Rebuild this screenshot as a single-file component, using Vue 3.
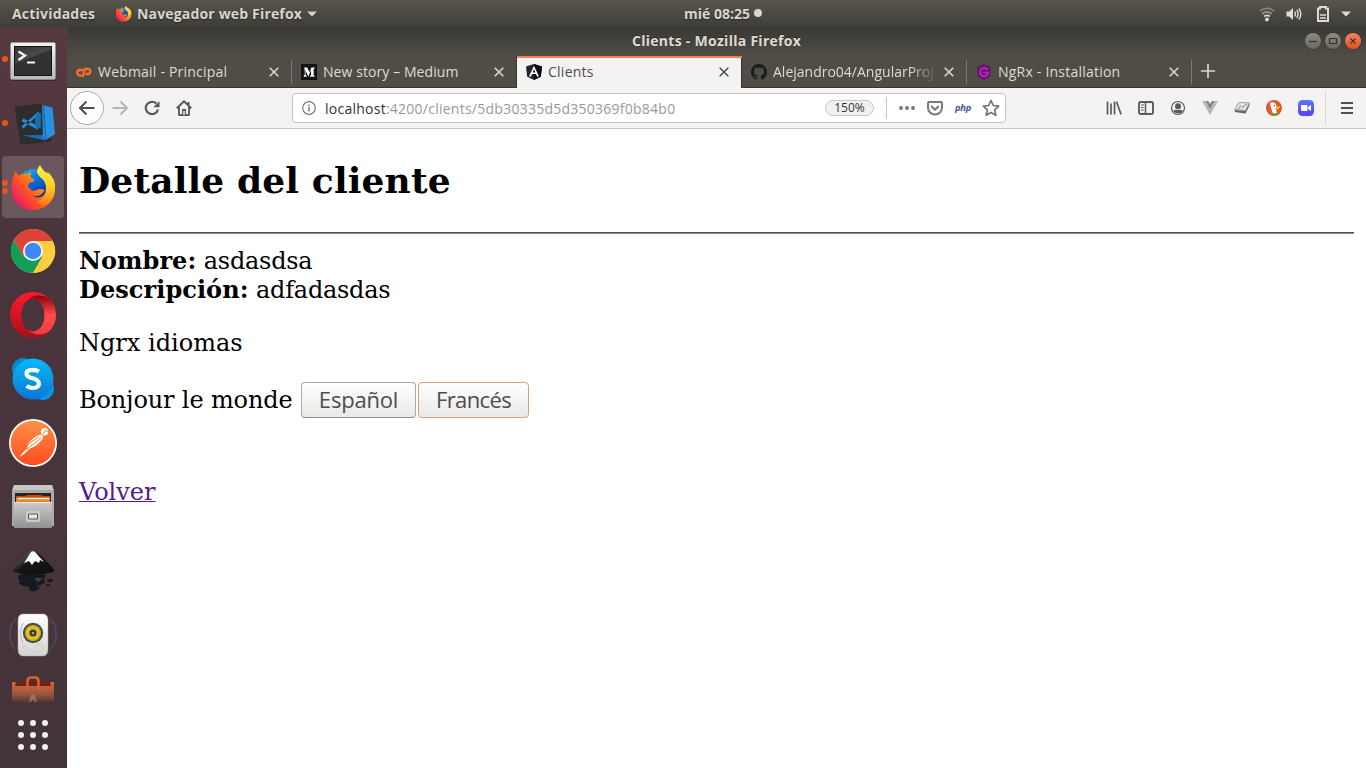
<script setup>
const tabs = [
  { id: 'cpanel', label: 'Webmail - Principal', cls: 't1' },
  { id: 'medium', label: 'New story – Medium', cls: 't2' },
  { id: 'angular', label: 'Clients', cls: 't3', active: true },
  { id: 'github', label: 'Alejandro04/AngularProj', cls: 't4' },
  { id: 'ngrx', label: 'NgRx - Installation', cls: 't5' },
]
</script>

<template>
  <div class="desktop">
    <header class="panel">
      <div class="panel-left">
        <span class="activities">Actividades</span>
        <svg class="ff-small" viewBox="0 0 48 48"><use href="#firefox" /></svg>
        <span class="appname">Navegador web Firefox</span>
        <svg class="caret" viewBox="0 0 10 6"><path d="M0 .5h10L5 5.5z" fill="#d3d1cb" /></svg>
      </div>
      <div class="clock"><span>mié 08:25</span><i></i></div>
      <div class="panel-right">
        <svg width="16" height="16" viewBox="0 0 16 16" fill="none" stroke-width="1.7">
          <path d="M1 5Q8 -.2 15 5" stroke="#85827b" /><path d="M3.2 7.800Q8 4 12.800 7.800" stroke="#99968f" />
          <path d="M5.2 10.500Q8 8.400 10.800 10.500" stroke="#dfdbd2" /><circle cx="8" cy="13.500" r="1.900" fill="#dfdbd2" />
        </svg>
        <svg width="16" height="16" viewBox="0 0 16 16" fill="none" stroke="#dfdbd2" stroke-width="1.4">
          <path d="M.5 5.500h2.700L7 2v12l-3.800-3.500H.5z" fill="#dfdbd2" stroke="none" />
          <path d="M8.700 5.600q1.600 2.400 0 4.800M10.800 4q2.600 4 0 8M12.900 2.500q3.800 5.500 0 11" />
        </svg>
        <svg width="14" height="16" viewBox="0 0 14 16" fill="none" stroke="#dfdbd2">
          <path d="M2 2.500h2V1h6v1.500h2V15H2z" stroke-width="2" /><path d="M4 9h6M4 12h6" stroke-width="1.500" />
        </svg>
        <svg class="caret" viewBox="0 0 10 6"><path d="M0 .5h10L5 5.500z" fill="#dfdbd2" /></svg>
      </div>
    </header>

    <div class="below">
      <nav class="dock">
        <div class="slot first">
          <i class="run"></i>
          <svg viewBox="0 0 48 48">
            <defs>
              <linearGradient id="gT" x2="0" y2="1"><stop stop-color="#f4f4f4" /><stop offset="1" stop-color="#b9b9b9" /></linearGradient>
              <linearGradient id="gS" x2=".5" y2="1"><stop stop-color="#353535" /><stop offset=".45" stop-color="#484a49" /><stop offset=".5" stop-color="#303131" /><stop offset="1" stop-color="#303131" /></linearGradient>
            </defs>
            <rect x="1" y="6" width="46" height="38" rx="1.500" fill="#00000055" />
            <rect x="1.500" y="5.500" width="45" height="37" rx="1.500" fill="url(#gT)" stroke="#999" stroke-width=".6" />
            <rect x="5" y="9" width="38" height="30" fill="#151515" /><rect x="6" y="10" width="36" height="28" fill="url(#gS)" />
            <path d="M9.500 14.500l6.500 4-6.500 4.500" fill="none" stroke="#f5f5f5" stroke-width="2.400" /><path d="M18 25.500h8" stroke="#f5f5f5" stroke-width="2" />
          </svg>
        </div>
        <div class="slot">
          <i class="run second"></i>
          <svg viewBox="0 0 48 48">
            <path d="M5.500 8L32 4.500 43 42.500 11.500 46z" fill="#2d2d2e" />
            <path d="M13 36.200l23-.2-1 5z" fill="#1173bd" />
            <path d="M33 6L43.500 8.500 46 35 37.500 40.500 34 41z" fill="#2692e0" /><path d="M33 6L35.500 37 34 41 37.500 40.500 35.500 8z" fill="#1a74bd" />
            <path fill-rule="evenodd" d="M29 13l2.500 1.500V28l-3 2.500L12.500 22l2-2.500 11.500 6V18.500L14.500 29.500 12.500 27.500z" fill="#2490dc" />
            <path d="M29 13l2.500 1.500V28l-3 2.500-2.500-5V18.500z" fill="#116db4" />
          </svg>
        </div>
        <div class="slot selected">
          <i class="run two"></i>
          <svg viewBox="0 0 48 48">
            <defs>
              <linearGradient id="gF" x1="1" y1="0" x2="0" y2=".8"><stop stop-color="#ffe72e" /><stop offset=".35" stop-color="#ff9b10" /><stop offset=".67" stop-color="#ff4b2a" /><stop offset="1" stop-color="#e41273" /></linearGradient>
              <linearGradient id="gB" x1=".2" x2=".7" y2="1"><stop stop-color="#13b0f0" /><stop offset=".5" stop-color="#0760d4" /><stop offset="1" stop-color="#1b1d72" /></linearGradient>
              <linearGradient id="gY" x2="0" y2="1"><stop stop-color="#fff34a" /><stop offset=".5" stop-color="#ffd32a" /><stop offset="1" stop-color="#ff7b14" /></linearGradient>
            </defs>
            <g id="firefox">
              <circle cx="25" cy="23" r="17" fill="url(#gB)" />
              <path d="M7 8q.5 3 2.500 4.500Q13 10 18 11l4-2.500-.5 5.500 4 3q-1 2-5 2.500-3 3 0 6 3 3.500 7 1.500 4-2 8 0-2 5.500-8 6-3 .5-5-.5 7 4 12 0 5-5 4.500-12L34 9l6 1q7 7 6 16-1 12-10 18-12 6-22 1Q3 40 2.500 27 2 16 7 8z" fill="url(#gF)" />
              <path d="M31 2q2 5 8 9 8 6 7 16-.5 9-7 13-7 4-11-1 9-3 9-14 0-7-6-11Q25 9 31 2z" fill="url(#gY)" />
            </g>
          </svg>
        </div>
        <div class="slot">
          <svg viewBox="0 0 48 48">
            <circle cx="24" cy="24" r="22" fill="#fdcd40" />
            <path d="M4.900 13A22 22 0 0 1 43.100 13L24 14 14.500 29.500z" fill="#db4437" />
            <path d="M4.900 13A22 22 0 0 0 24 46L33.500 29.500 14.500 29.500z" fill="#129d58" />
            <path d="M43.100 13A22 22 0 0 1 24 46L33.500 29.500 24 14z" fill="#fdcd40" /><path d="M24 14H43.600l-.8-1.600H24z" fill="#db4437" />
            <circle cx="24" cy="24" r="10" fill="#f5f5f5" /><circle cx="24" cy="24" r="8.200" fill="#4285f4" />
          </svg>
        </div>
        <div class="slot">
          <svg viewBox="0 0 48 48">
            <defs><linearGradient id="gO" x2="0" y2="1"><stop stop-color="#ff1b2d" /><stop offset="1" stop-color="#a70f17" /></linearGradient><linearGradient id="gP" x2="0" y2="1"><stop stop-color="#8f0008" /><stop offset=".5" stop-color="#ff4b4b" /><stop offset="1" stop-color="#ef3e3e" /></linearGradient></defs>
            <path fill-rule="evenodd" d="M24 1a23 23 0 1 0 0 46a23 23 0 0 0 0-46zM24 7.500c6.500 0 11.500 7 11.500 16.500S30.500 40.500 24 40.500 12.500 33.500 12.500 24 17.500 7.500 24 7.500z" fill="url(#gO)" />
            <path d="M18 9.500Q27 1 39.500 7A23 23 0 0 1 39.500 41Q29 47 18 38.500 22 41.300 26 40.300 35.500 37 35.500 24 35.500 11 26 7.700 22 7 18 9.500z" fill="url(#gP)" />
          </svg>
        </div>
        <div class="slot">
          <svg viewBox="0 0 48 48">
            <defs><linearGradient id="gK" x2="0" y2="1"><stop stop-color="#07b9f4" /><stop offset="1" stop-color="#0b77d7" /></linearGradient></defs>
            <circle cx="14" cy="14" r="11" fill="#0688cf" /><circle cx="34" cy="34" r="11" fill="#0695e4" /><circle cx="24" cy="24" r="20.500" fill="url(#gK)" />
            <path d="M29.800 16.700Q27.500 14.800 23.500 14.800C15.500 15 15.500 21.500 23.500 23.300S32.500 32.500 24 33Q20 33 17.700 30.800" fill="none" stroke="#fff" stroke-width="4.200" />
          </svg>
        </div>
        <div class="slot">
          <svg viewBox="0 0 48 48">
            <defs><linearGradient id="gM" x2="0" y2="1"><stop stop-color="#ff9144" /><stop offset="1" stop-color="#ff4c22" /></linearGradient></defs>
            <circle cx="24" cy="24" r="24" fill="#fff" /><circle cx="24" cy="24" r="22.300" fill="url(#gM)" />
            <circle cx="35.500" cy="12.800" r="3.700" fill="#fff" /><path d="M34 15l3-4 1.500 2" stroke="#ff803c" fill="none" />
            <path d="M31 15q4 2 2.500 5L28 26l-7 3.500-5.500 5-3.500 3-1-.5q3-4 7.500-8l.5-4q4-6 12.500-10z" fill="#fff" /><path d="M19 25.500l11-8M22 27l10-8M18 30l5-4" stroke="#ff7334" stroke-width="1" />
          </svg>
        </div>
        <div class="slot">
          <svg viewBox="0 0 48 48">
            <defs><linearGradient id="gC" x2="0" y2="1"><stop stop-color="#ccc" /><stop offset="1" stop-color="#919191" /></linearGradient></defs>
            <path d="M5 2h38l2 5v36H3V7z" fill="#aaa" /><path d="M5 2h38l1 5H4z" fill="#c7c7c7" />
            <path d="M6 10h36v10H6z" fill="#292424" /><path d="M7 13h9l2-1h14l2 1h7v7H7z" fill="#ba4a12" /><path d="M7 14.500h34v5H7z" fill="#e78831" /><path d="M9 15.500h31" stroke="#fff1dd" stroke-width="1.300" />
            <rect x="5" y="19" width="38" height="26" rx="1" fill="url(#gC)" /><path d="M5 19.500h38" stroke="#e3e3e3" />
            <rect x="17" y="28" width="14" height="11" rx="2" fill="#ccc" /><rect x="19" y="30.500" width="10" height="6" rx="1" fill="#555" /><rect x="20" y="31.500" width="8" height="4" fill="#e9e9e9" />
          </svg>
        </div>
        <div class="slot">
          <svg viewBox="0 0 48 48">
            <defs><linearGradient id="gI" x2="1" y2=".8"><stop stop-color="#999" /><stop offset=".5" stop-color="#151515" /><stop offset="1" stop-color="#111" /></linearGradient></defs>
            <path d="M9 28q14-3 28 0l-2 4 1 4-5 2-3 1 3 2-6 4-5-2 0-3-8-2 4-3-6-1z" fill="#151a20" />
            <path d="M21 4q3-2.500 6 0L44 21q3 4-2 4.500-6 1.500-8 2H14q-3-1.500-9-2.500-3-2 0-5z" fill="url(#gI)" />
            <path d="M22 5q2-1.500 4 0l9 10-4-2-1 3-4-2-3 4-3-4-5 2z" fill="#fafafa" />
            <path d="M25 31l9 0-5 4z" fill="#374756" /><ellipse cx="13" cy="36" rx="3" ry="1.500" fill="#151515" /><ellipse cx="41" cy="33.500" rx="3" ry="1.500" fill="#151515" /><ellipse cx="39" cy="38" rx="2" ry="1" fill="#151515" />
          </svg>
        </div>
        <div class="slot">
          <svg viewBox="0 0 48 48">
            <defs><linearGradient id="gR" x2="0" y2="1"><stop stop-color="#fff" /><stop offset="1" stop-color="#d3d3d0" /></linearGradient></defs>
            <g fill="none" stroke="#46577f" opacity=".55" stroke-width="1.500"><path d="M7 7q-12 16 0 32M41 7q12 16 0 32M4 10q-7 13 0 26M44 10q7 13 0 26" /></g>
            <path d="M13 3h22q4 1 4 6v29q0 7-5 7H14q-5 0-5-7V9q0-5 4-6z" fill="url(#gR)" stroke="#aaa" stroke-width=".5" />
            <circle cx="24" cy="22" r="10.200" fill="#474b4c" /><circle cx="24" cy="22" r="8" fill="#d0ae17" /><circle cx="24" cy="22" r="5.700" fill="none" stroke="#e6cb30" stroke-width="1.200" />
            <circle cx="24" cy="22" r="3.300" fill="#292b2d" /><circle cx="24" cy="22" r="1.500" fill="#9aa1a8" /><path d="M14 12q-5 10 0 20" fill="none" stroke="#839ac4" stroke-width="1" opacity=".7" />
            <circle cx="30" cy="36.500" r="4" fill="#ddd" stroke="#bbb" stroke-width=".5" /><path d="M14 38v-4l4 3v3" fill="none" stroke="#ccc" />
          </svg>
        </div>
        <div class="slot partial">
          <svg width="48" height="34" viewBox="0 0 48 34">
            <defs><linearGradient id="gQ" x2="0" y2="1"><stop stop-color="#b86641" /><stop offset=".55" stop-color="#96543c" /><stop offset="1" stop-color="#50343a" /></linearGradient></defs>
            <path d="M5 14h38v6H5z" fill="#6f2412" /><path d="M3 14l4 0-1 4-3 1zM45 14l-4 0 1 4 3 1z" fill="#e25a2b" /><path d="M3 18h42v16H3z" fill="url(#gQ)" />
            <path d="M18.500 22v-9q0-3.500 3.500-3.500h4q3.500 0 3.500 3.500v9" fill="none" stroke="#e05a2c" stroke-width="2.600" /><path d="M20 34l2-7q2-1 4 0l2 7h-2l-1-2h-2l-1 2z" fill="#a48d86" opacity=".6" />
          </svg>
        </div>
        <div class="grid"><i v-for="n in 9" :key="n"></i></div>
      </nav>

      <main class="window">
        <div class="titlebar">
          <span class="wtitle">Clients - Mozilla Firefox</span>
          <div class="wbtns">
            <i><svg viewBox="0 0 16 16"><path d="M4 8.500h8" /></svg></i>
            <i><svg viewBox="0 0 16 16"><path d="M4.500 5.500h7v5h-7z" /></svg></i>
            <i class="x"><svg viewBox="0 0 16 16"><path d="M5.300 5.300l5.400 5.400m0-5.400l-5.400 5.400" /></svg></i>
          </div>
        </div>
        <div class="tabs">
          <div v-for="t in tabs" :key="t.id" class="tab" :class="[t.id, { active: t.active }]">
            <svg v-if="t.id === 'cpanel'" class="fav" viewBox="0 0 16 16" fill="none" stroke="#ff6c2c" stroke-width="2.300"><path d="M7 6H4A2.500 2.500 0 0 0 4 11.500h1.500M6.800 13l2-8h3a2.300 2.300 0 0 1 0 5H9.500" /></svg>
            <svg v-else-if="t.id === 'medium'" class="fav" viewBox="0 0 16 16"><path d="M0 0h16v16H0z" fill="#121212" /><path d="M2.700 3.500h3.500l2.200 4.800 2-4.800h3.300v.8l-1 .9v6l1 .8v.7H9v-.7l1-.9V6l-2.700 6.700L4.500 6.200v4.500l1.200 1.400v.6h-3v-.6l1-1.400V5z" fill="#fff" /></svg>
            <svg v-else-if="t.id === 'angular'" class="fav" viewBox="0 0 16 16"><path d="M8 0l8 2.500-1.200 10.300L8 16l-6.800-3.200L0 2.500z" fill="#20242e" /><path d="M8 0l8 2.500-1.200 10.300L8 16z" fill="#0b0d14" /><path fill-rule="evenodd" d="M8 1.800l5 10.700h-2l-1-2.400H6l-1 2.400H3zM8 5.300L6.700 8.500h2.600z" fill="#fff" /></svg>
            <svg v-else-if="t.id === 'github'" class="fav" viewBox="0 0 16 16"><path fill="#1a1b1c" d="M8 0C3.580 0 0 3.580 0 8c0 3.540 2.290 6.530 5.470 7.590.4.070.55-.17.55-.38 0-.19-.01-.82-.01-1.490-2.010.37-2.530-.49-2.690-.94-.09-.23-.48-.94-.82-1.130-.28-.15-.68-.52-.01-.53.63-.01 1.080.58 1.230.82.72 1.210 1.870.87 2.330.66.07-.52.28-.87.51-1.070-1.780-.2-3.640-.89-3.640-3.950 0-.87.31-1.590.82-2.150-.08-.2-.36-1.020.08-2.120 0 0 .67-.21 2.200.82.64-.18 1.320-.27 2-.27s1.360.09 2 .27c1.530-1.040 2.200-.82 2.200-.82.44 1.100.16 1.920.08 2.120.51.56.82 1.270.82 2.150 0 3.070-1.870 3.750-3.650 3.950.29.25.54.73.54 1.480 0 1.070-.01 1.930-.01 2.200 0 .21.15.46.55.38A8.010 8.010 0 0 0 16 8c0-4.420-3.580-8-8-8z" /></svg>
            <svg v-else class="fav" viewBox="0 0 16 16"><path d="M8 0l7 2.500-1 10L8 16l-6-3.500-1-10z" fill="#58205e" /><path d="M12 5.500Q7.500 2.500 5 5.500q-2 4 .5 6.200 3.500 1.800 6-1 .8-1.200.5-2.700" fill="none" stroke="#d612e0" stroke-width="1.900" /><path d="M7.500 7.500q.5 2.200 3.500 1" fill="none" stroke="#d612e0" stroke-width="1.500" /></svg>
            <span class="tlabel" :class="t.cls">{{ t.label }}</span>
            <svg class="close" viewBox="0 0 10 10"><path d="M.7.7l8.600 8.600m0-8.600L.7 9.300" /></svg>
          </div>
          <svg class="plus" viewBox="0 0 14 14"><path d="M7 0v14M0 7h14" stroke="#d8d6cf" stroke-width="1.700" /></svg>
        </div>

        <div class="toolbar">
          <div class="back"><svg class="ic" viewBox="0 0 16 16"><path d="M15.500 8H1.500M7.500 1.500L1 8l6.500 6.500" stroke="#4e4e4e" stroke-width="2" fill="none" /></svg></div>
          <svg class="ic fwd" viewBox="0 0 16 16"><path d="M.5 8h14M8.500 1.500L15 8l-6.500 6.500" stroke="#b9b7b5" stroke-width="2" fill="none" /></svg>
          <svg class="ic rel" viewBox="0 0 16 16"><path d="M14 9.500A6.200 6.200 0 1 1 12.400 3.600" stroke="#5a5a5a" stroke-width="2.200" fill="none" /><path d="M15.500 1v6.200H9.300z" fill="#5a5a5a" /></svg>
          <svg class="ic home" viewBox="0 0 16 16"><path d="M.8 8.300L8 1.300l7.200 7M3 7v8h10V7M12.500 5V2" stroke="#5a5a5a" stroke-width="1.900" fill="none" stroke-linejoin="round" /><path d="M6 9h4v6H6z" fill="#5a5a5a" /><path d="M7.300 11h1.400v4H7.300z" fill="#f4f3f2" /></svg>
          <div class="url">
            <svg class="info" viewBox="0 0 14 14" fill="none" stroke="#7a7a7a"><circle cx="7" cy="7" r="6.300" stroke-width="1.200" /><path d="M7 6v4.500M7 3.500v1.600" stroke-width="1.500" /></svg>
            <span class="addr"><b>localhost</b>:4200/clients/5db30335d5d350369f0b84b0</span>
            <span class="zoom">150%</span>
            <i class="vsep"></i>
            <svg class="dots" viewBox="0 0 16 4" fill="#747474"><circle cx="2" cy="2" r="1.900" /><circle cx="8" cy="2" r="1.900" /><circle cx="14" cy="2" r="1.900" /></svg>
            <svg class="pocket" viewBox="0 0 16 16" fill="none" stroke="#7a7a7a" stroke-width="2" stroke-linecap="round" stroke-linejoin="round"><path d="M2 2h12q1 0 1 1v4.500a7 7 0 0 1-14 0V3q0-1 1-1zM4.700 6.500L8 9.700l3.300-3.200" /></svg>
            <span class="php">php</span>
            <svg class="star" viewBox="0 0 18 18"><path d="M9 1.500l2.300 5 5.400.6-4 3.700 1.100 5.500L9 13.500l-4.800 2.800 1.100-5.500-4-3.700 5.400-.6z" fill="none" stroke="#747474" stroke-width="1.700" stroke-linejoin="round" /></svg>
          </div>
          <div class="ext">
            <svg class="ic" viewBox="0 0 16 16" stroke="#5a5a5a" stroke-width="1.700"><path d="M1.500 1.500v13M5 3.500v11M8.500 1.500v13M10.500 1.800l4.600 12.700" /></svg>
            <svg class="ic" viewBox="0 0 16 16" fill="none" stroke="#5a5a5a"><rect x="1" y="2" width="14" height="12" rx="1.800" stroke-width="1.900" /><path d="M7.500 2v12" stroke-width="1.500" /><path d="M3 5h3M3 7.500h2.500M3 10h3" stroke-width="1" /></svg>
            <svg class="ic" viewBox="0 0 16 16"><circle cx="8" cy="8" r="6.500" fill="none" stroke="#5a5a5a" stroke-width="1.200" /><circle cx="8" cy="6.200" r="3" fill="#5a5a5a" /><path d="M3 11q2-2 5-1 3-1 5 1-4 5-10 0z" fill="#5a5a5a" /></svg>
            <svg class="ic" viewBox="0 0 16 16"><path d="M0 1h3.300L8 9.200 12.700 1H16L8 15z" fill="#b8b8b8" /><path d="M3.300 1H6.300L8 4l1.700-3h3L8 9.200z" fill="#858585" /></svg>
            <svg class="ic" viewBox="0 0 16 16"><path d="M5 2.500l10.500.5-4 7.500L.8 9.500z" fill="#e8e8e8" stroke="#888" stroke-width=".8" /><path d="M.8 10l10.700 1 4-7.500v2l-4 8L.8 12z" fill="#666" /><path d="M5.500 5l2.500 2.500 5-3.500M4 9l2-2" fill="none" stroke="#777" stroke-width=".9" /></svg>
            <svg class="ic" viewBox="0 0 16 16"><circle cx="8" cy="8" r="8" fill="#de5833" /><path d="M4 3q4-2 6 1.500l1 3.500-1 1 1 4.500Q9 14.500 7 14L4.800 7z" fill="#fff" /><path d="M9 8q3-2 5.500-1.200-1.500 2.300-5 3.200z" fill="#fdc51b" /><path d="M6 13l3 .5 3-.7v2l-3 .5-3-.5z" fill="#3ca82b" /><circle cx="8.500" cy="5.500" r=".7" fill="#2d4f8e" /></svg>
            <svg class="ic" viewBox="0 0 16 16"><defs><linearGradient id="gZ" x2="0" y2="1"><stop stop-color="#5b76ff" /><stop offset="1" stop-color="#5b3cff" /></linearGradient></defs><rect width="16" height="16" rx="4.500" fill="url(#gZ)" /><path d="M3 5h5.500q1 0 1 1v5H4.500Q3 11 3 9.500zM10.200 7L13 5v6l-2.800-2z" fill="#fff" /></svg>
          </div>
          <i class="vsep big"></i>
          <svg class="menu" viewBox="0 0 12 12"><path d="M0 1h12M0 6h12M0 11h12" stroke="#505050" stroke-width="1.900" /></svg>
        </div>

        <section class="page">
          <h1>Detalle del cliente</h1>
          <hr>
          <div class="field"><strong>Nombre:</strong> asdasdsa</div>
          <div class="field desc"><strong>Descripción:</strong> adfadasdas</div>
          <p>Ngrx idiomas</p>
          <div class="row"><span>Bonjour le monde</span><button class="es">Español</button><button class="fr">Francés</button></div>
          <a href="#">Volver</a>
        </section>
      </main>
    </div>
  </div>
</template>

<style>
html, body { margin: 0; overflow: hidden; }
</style>

<style scoped>
* { box-sizing: border-box; }
svg { display: block; flex: none; }
.desktop { width: 1366px; height: 768px; display: flex; flex-direction: column; font-family: "Open Sans", "Noto Sans", sans-serif; overflow: hidden; background: #fff; }
.panel { height: 27px; flex: none; display: grid; grid-template-columns: 1fr auto 1fr; align-items: center; background: linear-gradient(#58554b, #3e3d38); color: #d8d5cc; font-size: 14px; font-weight: 700; white-space: nowrap; text-shadow: 0 1px 1px #292824; }
.panel-left { display: flex; align-items: center; padding-left: 12px; }
.activities { letter-spacing: .2px; width: 103px; }
.ff-small { width: 17px; height: 17px; margin-right: 5px; }
.appname { letter-spacing: .17px; width: 165px; }
.caret { width: 10px; height: 6px; margin-left: 5px; }
.clock { display: flex; align-items: center; gap: 4px; width: 78px; margin-left: 80px; padding-bottom: 1px; }
.clock span { width: 66px; }
.clock i { width: 8px; height: 8px; border-radius: 50%; background: #d8d5cc; }
.panel-right { display: flex; align-items: center; justify-content: flex-end; padding-right: 15px; }
.panel-right svg:nth-child(1) { margin-right: 11px; }
.panel-right svg:nth-child(2) { margin-right: 14px; }
.panel-right svg:nth-child(3) { margin-right: 6px; }
.below { flex: 1; display: flex; min-height: 0; }
.dock { width: 67px; flex: none; padding-top: 2px; background: linear-gradient(#563a40, #4a343b 30%, #47343b 80%, #423437); }
.slot { height: 64px; position: relative; display: flex; align-items: center; padding-left: 9px; }
.slot svg { width: 48px; height: 48px; position: relative; }
.slot.first { margin-bottom: -2px; }
.slot.selected { height: 62px; margin: 1px 3px 1px 2px; padding-left: 7px; background: rgba(255, 255, 255, .17); border-radius: 4px; }
.run { position: absolute; left: 2px; top: 27px; width: 6px; height: 6px; border-radius: 50%; background: #e95420; }
.run.second { top: 29px; }
.run.two { left: 0; top: 24px; box-shadow: 0 8px #e95420; }
.slot.partial { height: 34px; margin: 1px 0; }
.slot.partial svg { height: 34px; }
.grid { display: grid; grid-template-columns: repeat(3, 6px); gap: 6px; margin: 18px 0 0 18px; }
.grid i { width: 6px; height: 6px; border-radius: 50%; background: #f4f2f2; }
.window { flex: 1; min-width: 0; display: flex; flex-direction: column; }
.titlebar { height: 29px; flex: none; display: grid; grid-template-columns: 1fr auto 1fr; align-items: center; background: linear-gradient(#393834, #504d46); color: #dfdbd2; font-size: 14px; font-weight: 700; }
.wtitle { grid-column: 2; width: 169px; white-space: nowrap; letter-spacing: .28px; padding-bottom: 2px; text-shadow: 0 -1px #2e2d29; }
.wbtns { display: flex; gap: 4px; justify-content: flex-end; padding: 0 5px 1px 0; }
.wbtns i { width: 16px; height: 16px; border-radius: 50%; background: linear-gradient(#8b8981, #69675f); box-shadow: 0 0 0 .5px #33322e; }
.wbtns .x { background: linear-gradient(#f58362, #e2531e); }
.wbtns path { fill: none; stroke: #33322d; stroke-width: 1.200; }
.tabs { height: 32px; flex: none; display: flex; background: #504d46; border-bottom: 1px solid #35342f; }
.tab { width: 225px; height: 31px; display: flex; align-items: center; padding: 0 13px 0 9px; position: relative; color: #dfdbd2; font-size: 14px; }
.tab.cpanel::after, .tab.github::after, .tab.ngrx::after { content: ""; position: absolute; right: 0; top: 4px; height: 24px; width: 1px; background: #7b7871; }
.tab.active { height: 32px; background: #f4f3f2; color: #4c4c4c; padding-bottom: 1px; box-shadow: inset 0 2px #f47b51, -1px 0 #35342f, inset -1px 0 #35342f; }
.fav { width: 16px; height: 16px; margin-right: 6px; }
.tlabel { flex: 1; white-space: nowrap; }
.t1 { letter-spacing: .2px; }
.t2 { letter-spacing: .08px; }
.t3 { letter-spacing: .25px; }
.t4 { -webkit-mask: linear-gradient(90deg, #000 137px, transparent 165px); mask: linear-gradient(90deg, #000 137px, transparent 165px); }
.t5 { letter-spacing: .22px; }
.close { width: 10px; height: 10px; margin-left: 4px; }
.close path { stroke: currentColor; stroke-width: 1.500; fill: none; }
.plus { width: 14px; height: 14px; margin: 8px 0 0 9px; }
.toolbar { height: 41px; flex: none; display: flex; align-items: center; background: #f4f3f2; border-bottom: 1px solid #c8c6c4; padding-left: 3px; }
.ic { width: 16px; height: 16px; }
.back { width: 34px; height: 34px; border: 1px solid #aaa; border-radius: 50%; background: #fdfdfd; display: grid; place-items: center; }
.fwd { margin-left: 8px; }
.rel { margin-left: 16px; }
.home { margin-left: 16px; }
.url { width: 714px; height: 30px; margin: 0 1px 0 100px; background: #fff; border: 1px solid #c4c2c0; border-radius: 4px; display: flex; align-items: center; padding-left: 9px; }
.info { width: 14px; height: 14px; }
.addr { width: 500px; margin-left: 9px; font-size: 14px; letter-spacing: .25px; color: #999; white-space: nowrap; }
.addr b { font-weight: 400; color: #333; }
.zoom { width: 49px; height: 16px; border: 1px solid #c8c8c8; border-radius: 8px; background: #f1f1f1; font-size: 12px; line-height: 14px; text-align: center; color: #333; }
.vsep { width: 1px; height: 22px; background: #c8c6c4; margin-left: 12px; }
.dots { width: 16px; height: 4px; margin-left: 12px; }
.pocket { width: 16px; height: 16px; margin-left: 12px; }
.php { width: 17px; margin: -2px 0 0 12px; font: italic 700 9.500px "Open Sans", sans-serif; color: #49568c; letter-spacing: -.3px; }
.star { width: 18px; height: 18px; margin-left: 10px; }
.ext { display: flex; gap: 16px; margin-left: 99px; }
.vsep.big { height: 34px; margin-left: 11px; background: #dad8d6; }
.menu { width: 12px; height: 12px; margin-left: 15px; }
.page { flex: 1; background: #fff; padding: 0 12px; font: 24px/29px "DejaVu Serif", serif; color: #000; }
h1 { font-size: 36px; line-height: 43px; margin: 30px 0; letter-spacing: .14px; }
hr { border: 0; height: 2px; margin: 0 0 12px; background: linear-gradient(#555 50%, #858585 50%); }
.field { letter-spacing: -.25px; }
.field strong { letter-spacing: .07px; }
.desc { margin-top: -1px; }
p { margin: 24px 0 0; }
.row { display: flex; align-items: center; margin-top: 23px; height: 38px; }
.row span { width: 222px; letter-spacing: -.14px; padding-top: 1px; }
button { height: 36px; border: 1px solid #aaa; border-bottom-color: #919191; border-radius: 4px; background: linear-gradient(#fff, #e9e8e7); color: #4c4c4c; font: 22px/30px "Open Sans", sans-serif; padding: 0 0 3px; }
.es { width: 115px; letter-spacing: -.2px; margin-right: 2px; }
.fr { width: 111px; border-color: #dd9b80; letter-spacing: -.6px; }
.page a { display: inline-block; margin-top: 59px; color: #551a8b; text-decoration-thickness: 1px; }
</style>
